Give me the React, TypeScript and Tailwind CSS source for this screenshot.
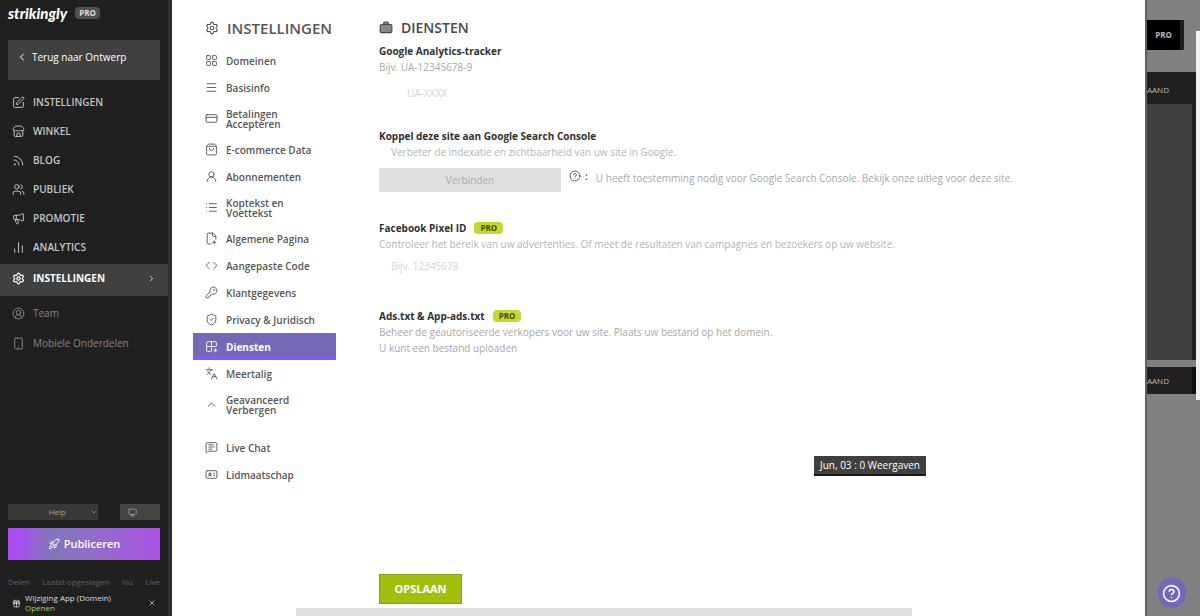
import React from "react";
import {
  LayoutGrid, Menu, CreditCard, ShoppingBag, UserRound, List, FilePlus2, Code, KeyRound, ShieldCheck,
  Grid2x2Plus, Languages, ChevronUp, MessageSquareText, IdCard, Settings, Store, Rss, Users, Megaphone,
  ChartNoAxesColumn, CircleUserRound, Smartphone, SquarePen, ChevronLeft, ChevronRight, ChevronDown,
  Rocket, Monitor, X, Gift, CircleHelp, Briefcase, CircleQuestionMark,
} from "lucide-react";
import type { LucideIcon } from "lucide-react";

type Item = { label: string; icon: LucideIcon };

const mainItems: Item[] = [
  { label: "INSTELLINGEN", icon: SquarePen },
  { label: "WINKEL", icon: Store },
  { label: "BLOG", icon: Rss },
  { label: "PUBLIEK", icon: Users },
  { label: "PROMOTIE", icon: Megaphone },
  { label: "ANALYTICS", icon: ChartNoAxesColumn },
];

const extraItems: Item[] = [
  { label: "Team", icon: CircleUserRound },
  { label: "Mobiele Onderdelen", icon: Smartphone },
];

const settings: Item[] = [
  { label: "Domeinen", icon: LayoutGrid },
  { label: "Basisinfo", icon: Menu },
  { label: "Betalingen Accepteren", icon: CreditCard },
  { label: "E-commerce Data", icon: ShoppingBag },
  { label: "Abonnementen", icon: UserRound },
  { label: "Koptekst en Voettekst", icon: List },
  { label: "Algemene Pagina", icon: FilePlus2 },
  { label: "Aangepaste Code", icon: Code },
  { label: "Klantgegevens", icon: KeyRound },
  { label: "Privacy & Juridisch", icon: ShieldCheck },
  { label: "Diensten", icon: Grid2x2Plus },
  { label: "Meertalig", icon: Languages },
  { label: "Geavanceerd Verbergen", icon: ChevronUp },
];

const memberItems: Item[] = [
  { label: "Live Chat", icon: MessageSquareText },
  { label: "Lidmaatschap", icon: IdCard },
];

function SideLink({ item, muted = false }: { item: Item; muted?: boolean }) {
  const Icon = item.icon;
  return (
    <a href="#" className={muted ? "flex h-[30px] items-center gap-2 px-3 text-[#858585]" : "flex h-[29px] items-center gap-2 px-3 font-semibold text-[#c4c4c4]"}>
      <Icon size={13} strokeWidth={1.8} />
      {item.label}
    </a>
  );
}

function Sidebar() {
  return (
    <aside className="flex w-[172px] shrink-0 flex-col border-r-4 border-[#303030] bg-[#202020] text-[10px]">
      <div className="flex h-[26px] items-center gap-2 px-2">
        <span className="font-['Lato'] text-[15px] leading-4 font-black text-white italic">strikingly</span>
        <span className="rounded-sm bg-[#505050] px-1 text-[8px] leading-3 font-bold text-[#dddddd]">PRO</span>
      </div>
      <a href="#" className="mx-2 mt-3.5 flex h-10 items-center gap-1 bg-[#404040] px-2 pb-1.5 text-[10px] text-white">
        <ChevronLeft size={12} />
        Terug naar Ontwerp
      </a>
      <nav className="mt-2" aria-label="Hoofdmenu">
        {mainItems.map((item) => <SideLink key={item.label} item={item} />)}
        <a href="#" className="mt-0.5 mb-0.5 flex h-8 items-center gap-2 bg-[#404040] px-3 pb-1 font-bold text-white">
          <Settings size={13} strokeWidth={2.2} />
          INSTELLINGEN
          <ChevronRight size={9} className="ml-auto" />
        </a>
        {extraItems.map((item) => <SideLink key={item.label} item={item} muted />)}
      </nav>
      <div className="mt-auto px-2">
        <div className="flex h-4 justify-between text-[#a0a0a0]">
          <button className="flex w-[90px] items-center justify-end gap-6 bg-[#383838] text-[8px]">Help <ChevronDown size={8} /></button>
          <button aria-label="Voorbeeld" className="flex w-10 items-center bg-[#444444] px-2"><Monitor size={9} /></button>
        </div>
        <button className="mt-2 flex h-8 w-full items-center justify-center gap-1 bg-linear-to-r from-[#a64ded] from-8% via-[#8077b9] via-30% to-[#ad50e8] text-[11px] font-semibold text-white">
          <Rocket size={12} /> Publiceren
        </button>
        <div className="mt-3.5 flex h-4 items-center justify-between text-[8px] text-[#606060]">
          <span>Delen</span><span>Laatst opgeslagen</span><span>Nu</span><span>Live</span>
        </div>
      </div>
      <div className="flex h-[26px] items-center gap-1 px-3 text-[8px] leading-[10px] text-[#dddddd]">
        <Gift size={9} className="shrink-0" />
        <p className="flex flex-col whitespace-nowrap">
          <span>Wijziging App (Domein)</span>
          <a href="#" className="text-[#b7cf4a]">Openen</a>
        </p>
        <button aria-label="Sluiten" className="ml-auto"><X size={8} /></button>
      </div>
    </aside>
  );
}

function SettingsLink({ item }: { item: Item }) {
  const Icon = item.icon;
  const active = item.label === "Diensten";
  const twoLines = /^(Betal|Kop|Geav)/.test(item.label);
  return (
    <a href="#" aria-current={active ? "page" : undefined} className={active ? "flex h-[27px] items-center gap-2 border-b-4 border-[#7661f4] bg-[#7568b6] pt-1 pl-3 font-bold text-white" : twoLines ? "flex h-[35px] items-center gap-2 pl-3" : "flex h-[27px] items-center gap-2 pl-3"}>
      <Icon size={13} strokeWidth={1.7} className="shrink-0" />
      <span className={twoLines ? "w-16" : "whitespace-nowrap"}>{item.label}</span>
    </a>
  );
}

function SettingsNav() {
  return (
    <nav aria-label="Instellingen" className="w-[143px] shrink-0 text-[10px] leading-[10px] font-semibold text-[#565656]">
      <h2 className="mb-[7px] flex h-6 items-center gap-2 pl-3 text-[15px] font-semibold">
        <Settings size={14} className="shrink-0" />INSTELLINGEN
      </h2>
      {settings.map((item) => <SettingsLink key={item.label} item={item} />)}
      <div className="mt-3">
        {memberItems.map((item) => <SettingsLink key={item.label} item={item} />)}
      </div>
    </nav>
  );
}

function Pro() {
  return <span className="rounded-sm bg-[#c4d92f] px-1.5 text-[8px] leading-3 font-bold text-[#414c00]">PRO</span>;
}

function Services() {
  return (
    <form className="flex min-w-0 flex-1 flex-col text-[10px] leading-3 text-[#a8a8a8]" onSubmit={(e) => e.preventDefault()}>
      <h1 className="flex h-6 items-center gap-2 text-[14px] font-semibold text-[#484848]">
        <Briefcase size={14} fill="#888888" />DIENSTEN
      </h1>
      <section className="mt-[5px]">
        <label htmlFor="analytics" className="block h-4 font-bold text-[#303030]">Google Analytics-tracker</label>
        <p>Bijv. UA-12345678-9</p>
        <input id="analytics" placeholder="UA-XXXX" className="mt-2 block h-6 w-[184px] px-7 placeholder:text-[#d4d4d4]" />
      </section>
      <section className="mt-[25px]">
        <h3 className="h-4 font-bold text-[#303030]">Koppel deze site aan Google Search Console</h3>
        <p className="ml-3 text-[#b4b4b4]">Verbeter de indexatie en zichtbaarheid van uw site in Google.</p>
        <div className="mt-2.5 flex h-6 items-start gap-2">
          <button type="button" className="h-6 w-[182px] bg-[#e0e0e0] text-[#aaaaaa]">Verbinden</button>
          <span className="flex items-center gap-1 pt-0.5 font-bold text-[#606060]"><CircleHelp size={12} />:</span>
          <p className="pt-1 whitespace-nowrap">U heeft toestemming nodig voor Google Search Console. Bekijk onze uitleg voor deze site.</p>
        </div>
      </section>
      <section className="mt-7">
        <label htmlFor="pixel" className="flex h-4 items-center gap-2 font-bold text-[#303030]">Facebook Pixel ID <Pro /></label>
        <p className="mt-0.5 whitespace-nowrap text-[#b4b4b4]">Controleer het bereik van uw advertenties. Of meet de resultaten van campagnes en bezoekers op uw website.</p>
        <input id="pixel" placeholder="Bijv. 12345678" className="mt-1 block h-6 w-[184px] px-3 placeholder:text-[#d4d4d4]" />
      </section>
      <section className="mt-[30px]">
        <h3 className="mb-0.5 flex h-4 items-center gap-2 font-bold text-[#303030]">Ads.txt &amp; App-ads.txt <Pro /></h3>
        <p className="whitespace-nowrap">Beheer de geautoriseerde verkopers voor uw site. Plaats uw bestand op het domein.</p>
        <p className="mt-1">U kunt een bestand uploaden</p>
      </section>
      <button type="submit" className="mt-auto h-[30px] w-[83px] self-start border border-[#879d22] bg-[#a2bf0d] text-[11px] font-bold text-white">OPSLAAN</button>
    </form>
  );
}

function SitePreview() {
  return (
    <div className="flex w-[55px] shrink-0 bg-[#808080] text-[8px] text-[#bbbbbb]">
      <div className="flex flex-1 flex-col border-l-2 border-[#606060]">
        <button className="mt-5 flex h-[30px] w-[37px] items-center justify-center border-r-4 border-[#202020] bg-black text-[8px] font-bold">PRO</button>
        <section className="mt-[22px] border-r-4 border-[#202020] bg-[#404040]">
          <h3 className="flex h-8 items-center bg-[#202020] pt-1">AAND</h3>
          <div className="h-64" />
        </section>
        <h3 className="mt-[7px] flex h-[27px] items-center border-r-4 border-[#101010] bg-[#202020]">AAND</h3>
        <button aria-label="Hulp" className="mt-auto mb-2 flex h-[30px] w-7 items-center justify-center self-center rounded-full bg-[#7468bd] text-white"><CircleQuestionMark size={19} /></button>
      </div>
      <div className="mt-[31px] h-[369px] w-1 bg-[#f1f1f1]" />
    </div>
  );
}

export default function App() {
  return (
    <div className="flex min-h-screen overflow-hidden bg-white font-['Open_Sans','Noto_Sans',sans-serif]">
      <Sidebar />
      <main className="relative flex min-w-0 flex-1 flex-col pt-4">
        <div className="flex flex-1 gap-[43px] pl-[21px]">
          <SettingsNav />
          <Services />
        </div>
        <div className="mt-1 mr-[233px] ml-[124px] h-2 bg-[#e0e0e0]" />
        <div role="tooltip" className="absolute top-[456px] right-[219px] flex h-5 w-28 items-center justify-center border-b-2 border-[#181818] bg-[#404040] text-[10px] whitespace-nowrap text-white">Jun, 03 : 0 Weergaven</div>
      </main>
      <SitePreview />
    </div>
  );
}
